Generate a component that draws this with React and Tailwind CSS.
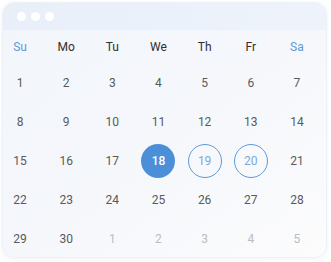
import React from "react";

const names = ["Su", "Mo", "Tu", "We", "Th", "Fr", "Sa"];

const days = [
    ...Array.from({ length: 30 }, (_, i) => ({ n: i + 1, cur: true })),
    ...[1, 2, 3, 4, 5].map(n => ({ n, cur: false })),
];

function DayCell({ day }) {
    if (day.cur && day.n === 18) {
        return (
            <div className="w-[34px] h-[34px] rounded-full bg-[#4b8fd8] text-white font-medium flex items-center justify-center">
                {day.n}
            </div>
        );
    }
    if (day.cur && (day.n === 19 || day.n === 20)) {
        return (
            <div className="w-[34px] h-[34px] rounded-full border border-[#5b9ade] text-[#7aa8dc] flex items-center justify-center">
                {day.n}
            </div>
        );
    }
    return <span className={day.cur ? "text-[#5a5a5a]" : "text-[#b9bcc2]"}>{day.n}</span>;
}

export default function App() {
    return (
        <div className="w-[331px] h-[262px] bg-white p-[2px] font-['Roboto','Inter',sans-serif] text-[12px]">
            <div className="w-[325px] h-[256px] rounded-[12px] overflow-hidden border border-[#eef1f6] bg-gradient-to-br from-[#f2f6fb] via-[#f5f7fb] to-[#fcfcfd] shadow-[0_1px_4px_rgba(120,140,170,0.12)]">
                <div className="h-[27px] bg-gradient-to-r from-[#e8eff9] to-[#eef3fb] flex items-center gap-[5px] pl-[14px]">
                    <span className="w-[9px] h-[9px] rounded-full bg-white" />
                    <span className="w-[9px] h-[9px] rounded-full bg-white" />
                    <span className="w-[9px] h-[9px] rounded-full bg-white" />
                </div>
                <div className="grid grid-cols-7 w-[323px] -ml-[6px]">
                    {names.map((n, i) => (
                        <div
                            key={n}
                            className={`h-[33px] pt-[1px] flex items-center justify-center ${i === 0 || i === 6 ? "text-[#5f9bd8]" : "text-[#2f2f2f]"}`}
                        >
                            {n}
                        </div>
                    ))}
                    {days.map((d, i) => (
                        <div key={i} className="h-[39px] flex items-center justify-center">
                            <DayCell day={d} />
                        </div>
                    ))}
                </div>
            </div>
        </div>
    );
}
